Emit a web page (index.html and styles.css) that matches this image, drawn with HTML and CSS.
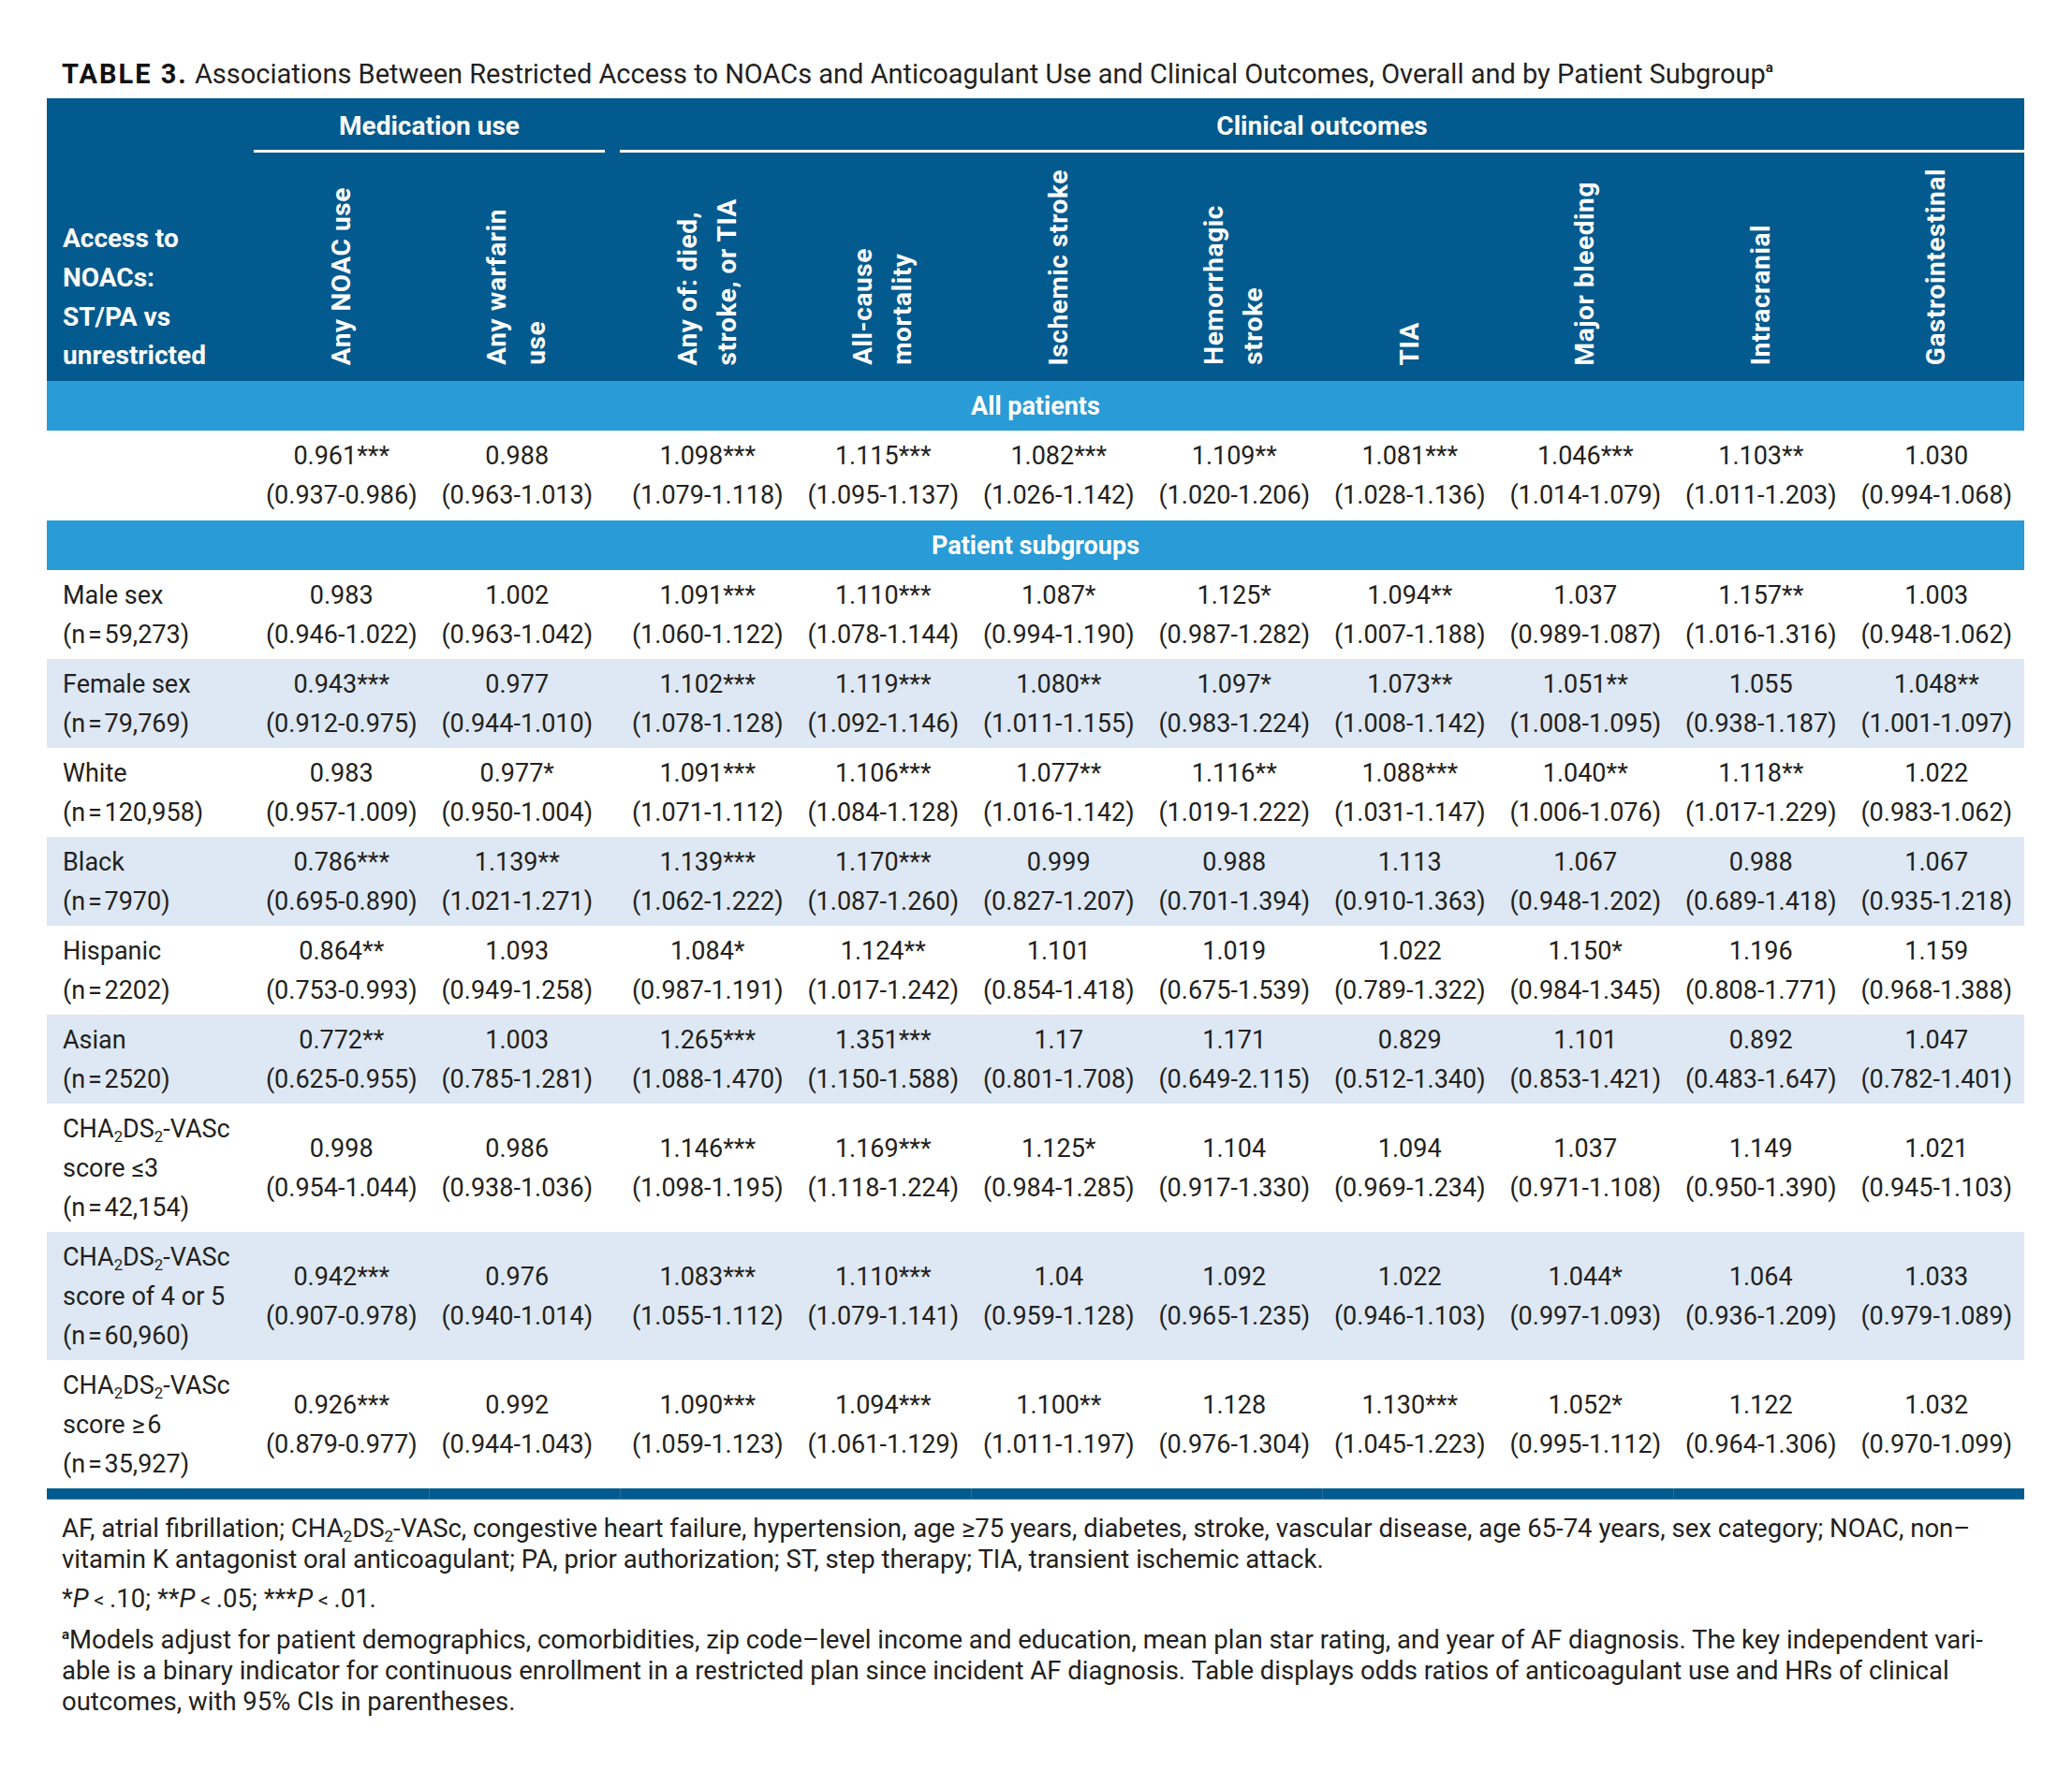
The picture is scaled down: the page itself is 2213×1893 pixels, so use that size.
FILE: index.html
```html
<!DOCTYPE html>
<html lang="en">
<head>
<meta charset="utf-8">
<title>Table 3</title>
<link rel="stylesheet" href="styles.css">
</head>
<body>
<div class="page">
  <h1 class="title"><span class="tno">TABLE 3.</span> Associations Between Restricted Access to NOACs and Anticoagulant Use and Clinical Outcomes, Overall and by Patient Subgroup<sup class="sa">a</sup></h1>

  <div class="table">
    <div class="thead">
      <div class="hlabel">Access to<br>NOACs:<br>ST/PA vs<br>unrestricted</div>
      <div class="group g-med">Medication use</div>
      <div class="group g-clin">Clinical outcomes</div>
      <div class="rot"><span>Any NOAC use</span></div>
      <div class="rot"><span>Any warfarin<br>use</span></div>
      <div class="hsp"></div>
      <div class="rot"><span>Any of: died,<br>stroke, or TIA</span></div>
      <div class="rot"><span>All-cause<br>mortality</span></div>
      <div class="rot"><span>Ischemic stroke</span></div>
      <div class="rot"><span>Hemorrhagic<br>stroke</span></div>
      <div class="rot"><span>TIA</span></div>
      <div class="rot"><span>Major bleeding</span></div>
      <div class="rot"><span>Intracranial</span></div>
      <div class="rot"><span>Gastrointestinal</span></div>
    </div>

    <div class="band">All patients</div>
    <div class="row first">
      <div class="lab"></div>
      <div class="d">0.961***<br>(0.937-0.986)</div>
      <div class="d">0.988<br>(0.963-1.013)</div>
      <div class="d cl">1.098***<br>(1.079-1.118)</div>
      <div class="d">1.115***<br>(1.095-1.137)</div>
      <div class="d">1.082***<br>(1.026-1.142)</div>
      <div class="d">1.109**<br>(1.020-1.206)</div>
      <div class="d">1.081***<br>(1.028-1.136)</div>
      <div class="d">1.046***<br>(1.014-1.079)</div>
      <div class="d">1.103**<br>(1.011-1.203)</div>
      <div class="d">1.030<br>(0.994-1.068)</div>
    </div>

    <div class="band">Patient subgroups</div>
    <div class="row">
      <div class="lab">Male sex<br>(n&#8202;=&#8202;59,273)</div>
      <div class="d">0.983<br>(0.946-1.022)</div>
      <div class="d">1.002<br>(0.963-1.042)</div>
      <div class="d cl">1.091***<br>(1.060-1.122)</div>
      <div class="d">1.110***<br>(1.078-1.144)</div>
      <div class="d">1.087*<br>(0.994-1.190)</div>
      <div class="d">1.125*<br>(0.987-1.282)</div>
      <div class="d">1.094**<br>(1.007-1.188)</div>
      <div class="d">1.037<br>(0.989-1.087)</div>
      <div class="d">1.157**<br>(1.016-1.316)</div>
      <div class="d">1.003<br>(0.948-1.062)</div>
    </div>
    <div class="row alt">
      <div class="lab">Female sex<br>(n&#8202;=&#8202;79,769)</div>
      <div class="d">0.943***<br>(0.912-0.975)</div>
      <div class="d">0.977<br>(0.944-1.010)</div>
      <div class="d cl">1.102***<br>(1.078-1.128)</div>
      <div class="d">1.119***<br>(1.092-1.146)</div>
      <div class="d">1.080**<br>(1.011-1.155)</div>
      <div class="d">1.097*<br>(0.983-1.224)</div>
      <div class="d">1.073**<br>(1.008-1.142)</div>
      <div class="d">1.051**<br>(1.008-1.095)</div>
      <div class="d">1.055<br>(0.938-1.187)</div>
      <div class="d">1.048**<br>(1.001-1.097)</div>
    </div>
    <div class="row">
      <div class="lab">White<br>(n&#8202;=&#8202;120,958)</div>
      <div class="d">0.983<br>(0.957-1.009)</div>
      <div class="d">0.977*<br>(0.950-1.004)</div>
      <div class="d cl">1.091***<br>(1.071-1.112)</div>
      <div class="d">1.106***<br>(1.084-1.128)</div>
      <div class="d">1.077**<br>(1.016-1.142)</div>
      <div class="d">1.116**<br>(1.019-1.222)</div>
      <div class="d">1.088***<br>(1.031-1.147)</div>
      <div class="d">1.040**<br>(1.006-1.076)</div>
      <div class="d">1.118**<br>(1.017-1.229)</div>
      <div class="d">1.022<br>(0.983-1.062)</div>
    </div>
    <div class="row alt">
      <div class="lab">Black<br>(n&#8202;=&#8202;7970)</div>
      <div class="d">0.786***<br>(0.695-0.890)</div>
      <div class="d">1.139**<br>(1.021-1.271)</div>
      <div class="d cl">1.139***<br>(1.062-1.222)</div>
      <div class="d">1.170***<br>(1.087-1.260)</div>
      <div class="d">0.999<br>(0.827-1.207)</div>
      <div class="d">0.988<br>(0.701-1.394)</div>
      <div class="d">1.113<br>(0.910-1.363)</div>
      <div class="d">1.067<br>(0.948-1.202)</div>
      <div class="d">0.988<br>(0.689-1.418)</div>
      <div class="d">1.067<br>(0.935-1.218)</div>
    </div>
    <div class="row">
      <div class="lab">Hispanic<br>(n&#8202;=&#8202;2202)</div>
      <div class="d">0.864**<br>(0.753-0.993)</div>
      <div class="d">1.093<br>(0.949-1.258)</div>
      <div class="d cl">1.084*<br>(0.987-1.191)</div>
      <div class="d">1.124**<br>(1.017-1.242)</div>
      <div class="d">1.101<br>(0.854-1.418)</div>
      <div class="d">1.019<br>(0.675-1.539)</div>
      <div class="d">1.022<br>(0.789-1.322)</div>
      <div class="d">1.150*<br>(0.984-1.345)</div>
      <div class="d">1.196<br>(0.808-1.771)</div>
      <div class="d">1.159<br>(0.968-1.388)</div>
    </div>
    <div class="row alt">
      <div class="lab">Asian<br>(n&#8202;=&#8202;2520)</div>
      <div class="d">0.772**<br>(0.625-0.955)</div>
      <div class="d">1.003<br>(0.785-1.281)</div>
      <div class="d cl">1.265***<br>(1.088-1.470)</div>
      <div class="d">1.351***<br>(1.150-1.588)</div>
      <div class="d">1.17<br>(0.801-1.708)</div>
      <div class="d">1.171<br>(0.649-2.115)</div>
      <div class="d">0.829<br>(0.512-1.340)</div>
      <div class="d">1.101<br>(0.853-1.421)</div>
      <div class="d">0.892<br>(0.483-1.647)</div>
      <div class="d">1.047<br>(0.782-1.401)</div>
    </div>
    <div class="row tall">
      <div class="lab">CHA<sub>2</sub>DS<sub>2</sub>-VASc<br>score ≤3<br>(n&#8202;=&#8202;42,154)</div>
      <div class="d">0.998<br>(0.954-1.044)</div>
      <div class="d">0.986<br>(0.938-1.036)</div>
      <div class="d cl">1.146***<br>(1.098-1.195)</div>
      <div class="d">1.169***<br>(1.118-1.224)</div>
      <div class="d">1.125*<br>(0.984-1.285)</div>
      <div class="d">1.104<br>(0.917-1.330)</div>
      <div class="d">1.094<br>(0.969-1.234)</div>
      <div class="d">1.037<br>(0.971-1.108)</div>
      <div class="d">1.149<br>(0.950-1.390)</div>
      <div class="d">1.021<br>(0.945-1.103)</div>
    </div>
    <div class="row tall alt">
      <div class="lab">CHA<sub>2</sub>DS<sub>2</sub>-VASc<br>score of 4 or 5<br>(n&#8202;=&#8202;60,960)</div>
      <div class="d">0.942***<br>(0.907-0.978)</div>
      <div class="d">0.976<br>(0.940-1.014)</div>
      <div class="d cl">1.083***<br>(1.055-1.112)</div>
      <div class="d">1.110***<br>(1.079-1.141)</div>
      <div class="d">1.04<br>(0.959-1.128)</div>
      <div class="d">1.092<br>(0.965-1.235)</div>
      <div class="d">1.022<br>(0.946-1.103)</div>
      <div class="d">1.044*<br>(0.997-1.093)</div>
      <div class="d">1.064<br>(0.936-1.209)</div>
      <div class="d">1.033<br>(0.979-1.089)</div>
    </div>
    <div class="row tall">
      <div class="lab">CHA<sub>2</sub>DS<sub>2</sub>-VASc<br>score ≥&#8202;6<br>(n&#8202;=&#8202;35,927)</div>
      <div class="d">0.926***<br>(0.879-0.977)</div>
      <div class="d">0.992<br>(0.944-1.043)</div>
      <div class="d cl">1.090***<br>(1.059-1.123)</div>
      <div class="d">1.094***<br>(1.061-1.129)</div>
      <div class="d">1.100**<br>(1.011-1.197)</div>
      <div class="d">1.128<br>(0.976-1.304)</div>
      <div class="d">1.130***<br>(1.045-1.223)</div>
      <div class="d">1.052*<br>(0.995-1.112)</div>
      <div class="d">1.122<br>(0.964-1.306)</div>
      <div class="d">1.032<br>(0.970-1.099)</div>
    </div>

    <div class="bar">
      <span class="seg s1"></span>
      <span class="seg s2"></span>
      <span class="seg s3"></span>
      <span class="seg s3"></span>
      <span class="seg s3"></span>
      <span class="seg s3"></span>
    </div>
  </div>

  <div class="notes">
    <p>AF, atrial fibrillation; CHA<sub>2</sub>DS<sub>2</sub>-VASc, congestive heart failure, hypertension, age ≥75 years, diabetes, stroke, vascular disease, age 65-74 years, sex category; NOAC, non–<br>vitamin K antagonist oral anticoagulant; PA, prior authorization; ST, step therapy; TIA, transient ischemic attack.</p>
    <p>*<i>P</i>&thinsp;<span class="lt">&lt;</span>&thinsp;.10; **<i>P</i>&thinsp;<span class="lt">&lt;</span>&thinsp;.05; ***<i>P</i>&thinsp;<span class="lt">&lt;</span>&thinsp;.01.</p>
    <p class="last"><sup class="na">a</sup>Models adjust for patient demographics, comorbidities, zip code–level income and education, mean plan star rating, and year of AF diagnosis. The key independent vari-<br>able is a binary indicator for continuous enrollment in a restricted plan since incident AF diagnosis. Table displays odds ratios of anticoagulant use and HRs of clinical<br>outcomes, with 95% CIs in parentheses.</p>
  </div>
</div>
</body>
</html>
```

FILE: styles.css
```css
* { box-sizing: border-box; }

body {
  margin: 0;
  background: #ffffff;
  color: #231f20;
  font-family: Roboto, "Liberation Sans", Arial, sans-serif;
}

.page {
  width: 2213px;
  padding: 58px 51px 40px 50px;
}

.title {
  margin: 0 0 5px;
  padding-left: 16px;
  font-size: 29px;
  line-height: 42px;
  font-weight: 400;
  white-space: nowrap;
  color: #231f20;
}

.tno {
  font-weight: 700;
  letter-spacing: 2px;
  color: #111;
}

.sa {
  font-size: 15px;
  font-weight: 700;
  vertical-align: 12px;
  line-height: 0;
}

.table {
  width: 2112px;
  --cols: 221px 187.5px 187.5px 16px repeat(8, 187.5px);
}

/* header */
.thead {
  display: grid;
  grid-template-columns: var(--cols);
  grid-template-rows: auto 244px;
  background: #035a8e;
  color: #ffffff;
  padding-top: 9px;
  font-weight: 700;
  font-size: 28px;
  line-height: 42px;
}

.hlabel {
  grid-column: 1;
  grid-row: 1 / 3;
  align-self: end;
  padding: 0 0 6px 17px;
  line-height: 41.7px;
  white-space: nowrap;
}

.group {
  grid-row: 1;
  text-align: center;
  padding-bottom: 4px;
  border-bottom: 3px solid #ffffff;
  white-space: nowrap;
}

.g-med { grid-column: 2 / 4; }
.g-clin { grid-column: 5 / 13; }

.hsp { grid-row: 2; }

.rot {
  grid-row: 2;
  display: flex;
  justify-content: center;
  align-items: flex-end;
  padding-bottom: 17px;
}

.rot span {
  writing-mode: vertical-rl;
  transform: rotate(180deg);
  white-space: nowrap;
  line-height: 42px;
  letter-spacing: 0.6px;
}

.cl { grid-column-start: 5; }

/* section bands */
.band {
  background: #299bd6;
  color: #ffffff;
  font-weight: 700;
  font-size: 27px;
  line-height: 42px;
  text-align: center;
  padding: 6px 0 5px;
}

/* body rows */
.row {
  display: grid;
  grid-template-columns: var(--cols);
  align-items: center;
  padding: 6px 0 5px;
  font-size: 27px;
  line-height: 42px;
}

.row.first { padding: 6px 0 6px; }
.row.alt { background: #dde8f4; }

.lab {
  padding-left: 17px;
  white-space: nowrap;
  align-self: start;
}

.row:not(.tall) .lab { align-self: center; }

.d {
  text-align: center;
  white-space: nowrap;
}

sub {
  font-size: 0.62em;
  vertical-align: -0.28em;
  line-height: 0;
}

/* bottom bar */
.bar {
  display: flex;
  height: 12px;
  background: #035a8e;
  border-bottom: 1px solid #3d80ad;
}

.seg { display: block; height: 100%; }
.s1 { width: 408px; }
.s2 { width: 204px; border-left: 1px solid #2a6f9e; }
.s3 { width: 375px; border-left: 1px solid #2a6f9e; }

/* notes */
.notes {
  padding-left: 16px;
  margin-top: 14px;
  font-size: 27.5px;
  line-height: 33px;
  white-space: nowrap;
}

.notes p { margin: 0 0 9px; }
.notes p.last { margin-top: 0; }

.lt { font-size: 0.8em; }

.na {
  font-size: 15px;
  font-weight: 700;
  vertical-align: 10px;
  line-height: 0;
}
```
